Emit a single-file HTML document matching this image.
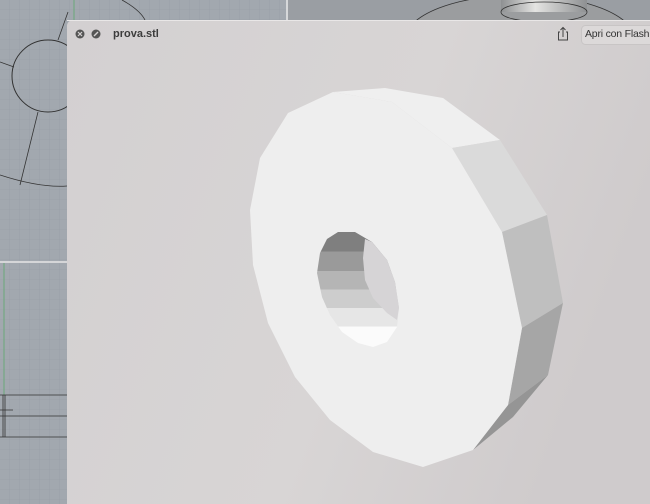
<!DOCTYPE html>
<html><head><meta charset="utf-8"><style>
html,body{margin:0;padding:0;width:650px;height:504px;overflow:hidden;background:#a2a8af;font-family:"Liberation Sans",sans-serif}
.abs{position:absolute}
</style></head><body>
<svg class="abs" style="left:0;top:0" width="650" height="504">
<defs>
<pattern id="g" width="10" height="10" patternUnits="userSpaceOnUse"><path d="M10 0V10H0" fill="none" stroke="#959ca4" stroke-width="0.6"/></pattern>
<linearGradient id="h" x1="0" y1="0" x2="0" y2="1">
<stop offset="0" stop-color="#7f7f7f"/><stop offset="0.17" stop-color="#7f7f7f"/>
<stop offset="0.17" stop-color="#9a9a9a"/><stop offset="0.34" stop-color="#9a9a9a"/>
<stop offset="0.34" stop-color="#b5b5b5"/><stop offset="0.5" stop-color="#b5b5b5"/>
<stop offset="0.5" stop-color="#cdcdcd"/><stop offset="0.66" stop-color="#cdcdcd"/>
<stop offset="0.66" stop-color="#e6e6e6"/><stop offset="0.82" stop-color="#e6e6e6"/>
<stop offset="0.82" stop-color="#fbfbfb"/><stop offset="1" stop-color="#fbfbfb"/></linearGradient>
<linearGradient id="w" x1="0" y1="0" x2="1" y2="0.3"><stop offset="0" stop-color="#d3d0d1"/><stop offset="0.6" stop-color="#d8d5d5"/><stop offset="1" stop-color="#cfcbcc"/></linearGradient>
<linearGradient id="cy" x1="0" x2="1"><stop offset="0" stop-color="#8e9092"/><stop offset="0.4" stop-color="#e4e4e2"/><stop offset="1" stop-color="#8e9092"/></linearGradient>
</defs>
<rect width="650" height="504" fill="#a2a8af"/>
<rect width="650" height="504" fill="url(#g)"/>
<rect x="288" y="0" width="362" height="20" fill="#9a9ea3"/>
<line x1="287" y1="0" x2="287" y2="20" stroke="#e8e8e8" stroke-width="1.5"/>
<ellipse cx="520" cy="40" rx="115" ry="45" fill="#9b9d9f" stroke="#333" stroke-width="0.8"/>
<rect x="501" y="0" width="86" height="12" fill="url(#cy)"/>
<ellipse cx="544" cy="12" rx="43" ry="10" fill="none" stroke="#333" stroke-width="0.8"/>
<line x1="74" y1="0" x2="74" y2="20" stroke="#6aa97a" stroke-width="1"/>
<circle cx="48" cy="76" r="36" fill="none" stroke="#333" stroke-width="1"/>
<path d="M0 62L14 67M58 40L68 12M38 112L20 185M0 175Q40 188 67 186M122 0Q140 10 145 20" fill="none" stroke="#333" stroke-width="0.8"/>
<line x1="0" y1="262" x2="67" y2="262" stroke="#e6e6e6" stroke-width="1.5"/>
<line x1="4" y1="263" x2="4" y2="395" stroke="#6aa97a" stroke-width="1"/>
<path d="M0 395H67M0 416H67M0 437H67M3 395V437M5 395V437M0 410H13" fill="none" stroke="#333" stroke-width="0.8"/>
<rect x="67" y="20" width="590" height="490" rx="6" fill="url(#w)"/>
<rect x="67" y="20" width="583" height="1" fill="#e9e7e7"/>
<polygon points="333,92 385,88 443,98 500,140 452,148 392,102" fill="#efefef"/>
<polygon points="452,148 500,140 547,215 502,232" fill="#dadada"/>
<polygon points="502,232 547,215 563,303 522,328" fill="#bfbfbf"/>
<polygon points="522,328 563,303 548,375 508,405" fill="#a6a6a6"/>
<polygon points="508,405 548,375 513,417 473,450" fill="#959595"/>
<polygon points="333,92 392,102 452,148 502,232 522,328 508,405 473,450 423,467 373,452 330,420 295,377 268,323 253,265 250,210 260,158 288,113" fill="#eeeeee"/>
<polygon points="338,232 355,232 372,242 387,260 395,282 399,308 397,327 387,342 373,347 358,343 342,332 330,315 322,297 317,273 320,253 327,239" fill="url(#h)"/>
<polygon points="365,239 372,242 387,260 395,282 399,308 397,320 387,313 373,298 365,280 363,258" fill="#d6d4d6"/>
<circle cx="80" cy="34" r="4.5" fill="#555"/>
<path d="M78 32L82 36M82 32L78 36" stroke="#d5d2d2" stroke-width="1.2"/>
<circle cx="96" cy="34" r="4.5" fill="#555"/>
<path d="M94 36L98 32" stroke="#d5d2d2" stroke-width="1.4"/>
<path d="M560 32H558.5V40H567.5V32H566M563 37V27.5M560.5 30L563 27.5L565.5 30" fill="none" stroke="#444" stroke-width="1"/>
<rect x="581.5" y="25.5" width="80" height="19" rx="4" fill="#dcd9d9" stroke="#c8c5c5"/>
</svg>
<div class="abs" style="left:113px;top:28px;font-size:11px;font-weight:bold;color:#3c3c3c">prova.stl</div>
<div class="abs" style="left:585px;top:28px;font-size:10.5px;letter-spacing:-0.2px;color:#333;white-space:nowrap">Apri con Flash</div>
</body></html>
